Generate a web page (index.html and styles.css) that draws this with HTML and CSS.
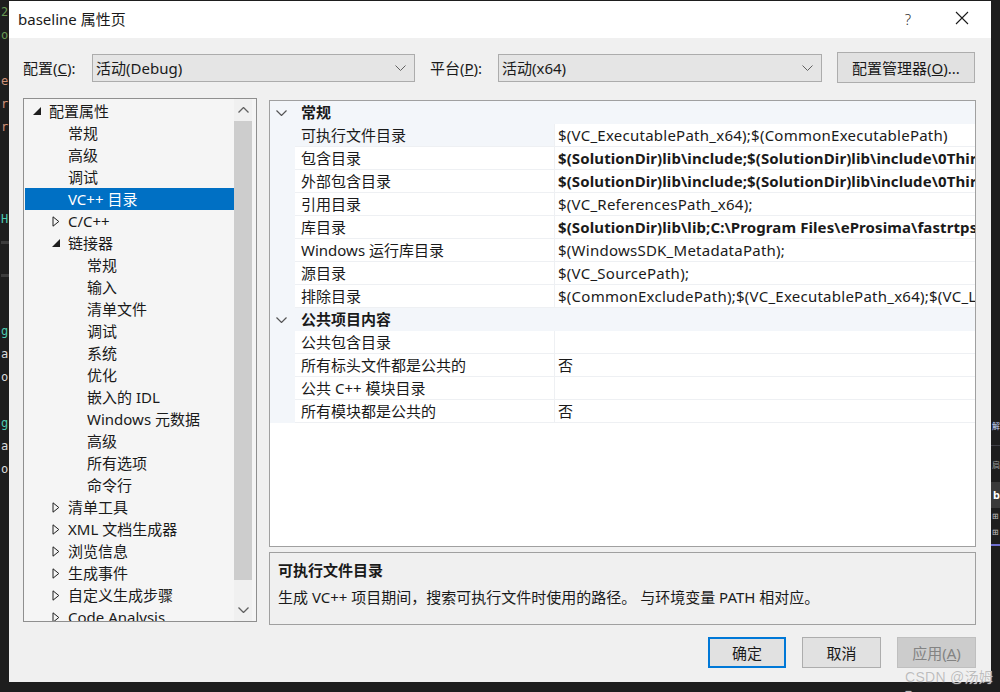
FILE: index.html
```html
<!DOCTYPE html>
<html lang="zh-CN">
<head>
<meta charset="utf-8">
<title>baseline 属性页</title>
<link rel="stylesheet" href="styles.css">
</head>
<body>
<div class="screen">
  <div class="strip left-strip">
    <div class="code c-green">2</div>
    <div class="code c-green">o</div>
    <div class="code"></div>
    <div class="code c-orange">e</div>
    <div class="code c-orange">r</div>
    <div class="code c-orange">r</div>
    <div class="code"></div>
    <div class="code"></div>
    <div class="code"></div>
    <div class="code c-teal">H</div>
    <div class="code"><span class="bar"></span></div>
    <div class="code"><span class="bar"></span></div>
    <div class="code"></div>
    <div class="code c-teal">g</div>
    <div class="code c-white">a</div>
    <div class="code c-white">o</div>
    <div class="code"></div>
    <div class="code c-teal">g</div>
    <div class="code c-white">a</div>
    <div class="code c-white">o</div>
  </div>

  <div class="dialog">
    <div class="titlebar">
      <span class="title">baseline 属性页</span>
      <span class="help">?</span>
      <span class="close"><svg width="14" height="14" viewBox="0 0 14 14"><path d="M1 1L13 13M13 1L1 13" stroke="#1a1a1a" stroke-width="1.1" fill="none"/></svg></span>
    </div>

    <div class="config-row">
      <span class="label lbl-config">配置(<u>C</u>):</span>
      <div class="combo combo-config"><span>活动(Debug)</span><svg class="chev" width="11" height="6" viewBox="0 0 11 6"><path d="M0.5 0.5L5.5 5.5L10.5 0.5" stroke="#606060" fill="none"/></svg></div>
      <span class="label lbl-platform">平台(<u>P</u>):</span>
      <div class="combo combo-platform"><span>活动(x64)</span><svg class="chev" width="11" height="6" viewBox="0 0 11 6"><path d="M0.5 0.5L5.5 5.5L10.5 0.5" stroke="#606060" fill="none"/></svg></div>
      <div class="btn btn-manager">配置管理器(<u>O</u>)...</div>
    </div>

    <div class="main">
      <div class="tree-panel">
        <div class="tree">
          <div class="trow l0"><span class="exp"><svg width="8" height="8" viewBox="0 0 8 8"><path d="M8 0V8H0Z" fill="#1e1e1e"/></svg></span>配置属性</div>
          <div class="trow l1"><span class="exp"></span>常规</div>
          <div class="trow l1"><span class="exp"></span>高级</div>
          <div class="trow l1"><span class="exp"></span>调试</div>
          <div class="trow l1 selected"><span class="exp"></span>VC++ 目录</div>
          <div class="trow l1"><span class="exp"><svg width="8" height="11" viewBox="0 0 8 11"><path d="M1 0.8V10.2L6.8 5.5Z" fill="none" stroke="#1e1e1e"/></svg></span>C/C++</div>
          <div class="trow l1"><span class="exp"><svg width="8" height="8" viewBox="0 0 8 8"><path d="M8 0V8H0Z" fill="#1e1e1e"/></svg></span>链接器</div>
          <div class="trow l2"><span class="exp"></span>常规</div>
          <div class="trow l2"><span class="exp"></span>输入</div>
          <div class="trow l2"><span class="exp"></span>清单文件</div>
          <div class="trow l2"><span class="exp"></span>调试</div>
          <div class="trow l2"><span class="exp"></span>系统</div>
          <div class="trow l2"><span class="exp"></span>优化</div>
          <div class="trow l2"><span class="exp"></span>嵌入的 IDL</div>
          <div class="trow l2"><span class="exp"></span>Windows 元数据</div>
          <div class="trow l2"><span class="exp"></span>高级</div>
          <div class="trow l2"><span class="exp"></span>所有选项</div>
          <div class="trow l2"><span class="exp"></span>命令行</div>
          <div class="trow l1"><span class="exp"><svg width="8" height="11" viewBox="0 0 8 11"><path d="M1 0.8V10.2L6.8 5.5Z" fill="none" stroke="#1e1e1e"/></svg></span>清单工具</div>
          <div class="trow l1"><span class="exp"><svg width="8" height="11" viewBox="0 0 8 11"><path d="M1 0.8V10.2L6.8 5.5Z" fill="none" stroke="#1e1e1e"/></svg></span>XML 文档生成器</div>
          <div class="trow l1"><span class="exp"><svg width="8" height="11" viewBox="0 0 8 11"><path d="M1 0.8V10.2L6.8 5.5Z" fill="none" stroke="#1e1e1e"/></svg></span>浏览信息</div>
          <div class="trow l1"><span class="exp"><svg width="8" height="11" viewBox="0 0 8 11"><path d="M1 0.8V10.2L6.8 5.5Z" fill="none" stroke="#1e1e1e"/></svg></span>生成事件</div>
          <div class="trow l1"><span class="exp"><svg width="8" height="11" viewBox="0 0 8 11"><path d="M1 0.8V10.2L6.8 5.5Z" fill="none" stroke="#1e1e1e"/></svg></span>自定义生成步骤</div>
          <div class="trow l1"><span class="exp"><svg width="8" height="11" viewBox="0 0 8 11"><path d="M1 0.8V10.2L6.8 5.5Z" fill="none" stroke="#1e1e1e"/></svg></span>Code Analysis</div>
        </div>
        <div class="vscroll">
          <div class="sbtn"><svg width="11" height="6" viewBox="0 0 11 6"><path d="M0.5 5.5L5.5 0.5L10.5 5.5" stroke="#606060" stroke-width="1.3" fill="none"/></svg></div>
          <div class="thumb-wrap"><div class="thumb"></div></div>
          <div class="sbtn"><svg width="11" height="6" viewBox="0 0 11 6"><path d="M0.5 0.5L5.5 5.5L10.5 0.5" stroke="#606060" stroke-width="1.3" fill="none"/></svg></div>
        </div>
      </div>

      <div class="right-col">
        <div class="grid">
          <div class="cat"><span class="gut"><svg width="11" height="6" viewBox="0 0 11 6"><path d="M0.5 0.5L5.5 5.5L10.5 0.5" stroke="#555" stroke-width="1.2" fill="none"/></svg></span><span class="cat-name">常规</span></div>
          <div class="prow sel"><span class="gut"></span><span class="pname">可执行文件目录</span><span class="pval">$(VC_ExecutablePath_x64);$(CommonExecutablePath)</span></div>
          <div class="prow"><span class="gut"></span><span class="pname">包含目录</span><span class="pval bold">$(SolutionDir)lib\include;$(SolutionDir)lib\include\0ThirdParty;$(IncludePath)</span></div>
          <div class="prow"><span class="gut"></span><span class="pname">外部包含目录</span><span class="pval bold">$(SolutionDir)lib\include;$(SolutionDir)lib\include\0ThirdParty;$(ExternalIncludePath)</span></div>
          <div class="prow"><span class="gut"></span><span class="pname">引用目录</span><span class="pval">$(VC_ReferencesPath_x64);</span></div>
          <div class="prow"><span class="gut"></span><span class="pname">库目录</span><span class="pval bold">$(SolutionDir)lib\lib;C:\Program Files\eProsima\fastrtps 2.0.0\lib;$(LibraryPath)</span></div>
          <div class="prow"><span class="gut"></span><span class="pname">Windows 运行库目录</span><span class="pval">$(WindowsSDK_MetadataPath);</span></div>
          <div class="prow"><span class="gut"></span><span class="pname">源目录</span><span class="pval">$(VC_SourcePath);</span></div>
          <div class="prow"><span class="gut"></span><span class="pname">排除目录</span><span class="pval">$(CommonExcludePath);$(VC_ExecutablePath_x64);$(VC_LibraryPath_x64)</span></div>
          <div class="cat"><span class="gut"><svg width="11" height="6" viewBox="0 0 11 6"><path d="M0.5 0.5L5.5 5.5L10.5 0.5" stroke="#555" stroke-width="1.2" fill="none"/></svg></span><span class="cat-name">公共项目内容</span></div>
          <div class="prow"><span class="gut"></span><span class="pname">公共包含目录</span><span class="pval"></span></div>
          <div class="prow"><span class="gut"></span><span class="pname">所有标头文件都是公共的</span><span class="pval">否</span></div>
          <div class="prow"><span class="gut"></span><span class="pname">公共 C++ 模块目录</span><span class="pval"></span></div>
          <div class="prow"><span class="gut"></span><span class="pname">所有模块都是公共的</span><span class="pval">否</span></div>
        </div>
        <div class="desc">
          <div class="desc-title">可执行文件目录</div>
          <div class="desc-text">生成 VC++ 项目期间，搜索可执行文件时使用的路径。 与环境变量 PATH 相对应。</div>
        </div>
      </div>
    </div>

    <div class="button-row">
      <div class="btn btn-dlg btn-default">确定</div>
      <div class="btn btn-dlg">取消</div>
      <div class="btn btn-dlg btn-disabled">应用(<u>A</u>)</div>
    </div>
  </div>

  <div class="strip right-strip">
    <div class="rs-gap"></div>
    <div class="rs-char">解</div>
    <div class="rs-line"></div>
    <div class="rs-char dim">扃</div>
    <div class="rs-box">b</div>
    <div class="rs-icon">⊞</div>
    <div class="rs-icon">⊞</div>
    <div class="rs-blue"></div>
  </div>
</div>
<div class="watermark">CSDN @汤姆z</div>
</body>
</html>
```

FILE: styles.css
```css
* { box-sizing: border-box; }

html, body {
  margin: 0;
  padding: 0;
}

body {
  width: 1000px;
  height: 692px;
  overflow: hidden;
  background: #1e1e1e;
  font-family: "Noto Sans", "Noto Sans CJK SC", sans-serif;
  font-size: 15px;
  color: #1a1a1a;
  position: relative;
}

.screen {
  display: flex;
  padding-top: 1px;
  height: 692px;
}

/* editor strips around the dialog */
.strip {
  width: 9px;
  flex: none;
  overflow: hidden;
  background: #1e1e1e;
}

.code {
  height: 23px;
  line-height: 23px;
  font-family: "DejaVu Sans Mono", monospace;
  font-size: 12px;
  padding-left: 1px;
  color: #d4d4d4;
}

.code .bar {
  display: block;
  margin-top: 10px;
  height: 3px;
  background: #3c3c3c;
}

.c-green { color: #6a9955; }
.c-orange { color: #ce9178; }
.c-teal { color: #4ec9b0; }
.c-white { color: #dcdcdc; }

.right-strip {
  display: flex;
  flex-direction: column;
}

.rs-gap { height: 412px; flex: none; }
.rs-char {
  height: 26px;
  line-height: 26px;
  color: #c8d8ff;
  font-size: 8px;
  padding-left: 1px;
}
.rs-char.dim { color: #9a9a9a; }
.rs-line { height: 1px; background: #3f3f46; margin: 6px 0; }
.rs-box {
  height: 26px;
  margin-top: 4px;
  background: #3a3a3a;
  color: #ffffff;
  font-weight: bold;
  font-size: 11px;
  padding-left: 2px;
  line-height: 26px;
}
.rs-icon {
  height: 16px;
  line-height: 16px;
  font-size: 8px;
  color: #c0c0c0;
  padding-left: 1px;
}
.rs-blue { height: 2px; background: #7070d0; margin-top: 4px; }

/* dialog */
.dialog {
  width: 982px;
  height: 681px;
  flex: none;
  background: #f0f0f0;
  display: flex;
  flex-direction: column;
}

.titlebar {
  height: 37px;
  background: #ffffff;
  display: flex;
  align-items: center;
  padding-left: 9px;
}

.title {
  font-size: 15px;
  flex: 1;
  margin-top: -2px;
}

.help {
  font-size: 15px;
  font-weight: 300;
  color: #333;
  width: 20px;
  margin-right: 37px;
  text-align: center;
  margin-top: -2px;
}

.close {
  width: 14px;
  height: 14px;
  margin-right: 22px;
  display: flex;
  margin-top: -3px;
}

.config-row {
  margin-top: 14px;
  height: 31px;
  display: flex;
  align-items: center;
  padding-left: 14px;
}

.label {
  flex: none;
}

.lbl-config { width: 69px; }
.lbl-platform { width: 68px; margin-left: 15px; }

.combo {
  height: 28px;
  background: #e5e5e5;
  border: 1px solid #acacac;
  display: flex;
  align-items: center;
  justify-content: space-between;
  padding: 0 8px 0 3px;
}

.combo-config { width: 323px; }
.combo-platform { width: 324px; }

.chev { flex: none; }

.btn {
  height: 31px;
  background: #e1e1e1;
  border: 1px solid #adadad;
  display: flex;
  align-items: center;
  justify-content: center;
  flex: none;
}

.btn-manager {
  width: 138px;
  margin-left: 15px;
}

/* main area */
.main {
  margin-top: 15px;
  height: 527px;
  display: flex;
  align-items: flex-start;
  padding-left: 14px;
}

.tree-panel {
  width: 234px;
  height: 524px;
  border: 1px solid #8f8f8f;
  background: #f5f5f5;
  display: flex;
  padding: 0 3px 0 0;
  flex: none;
}

.tree {
  width: 210px;
  padding: 1px 0 0 1px;
  overflow: hidden;
}

.trow {
  height: 22px;
  line-height: 22px;
  white-space: nowrap;
  display: flex;
  align-items: center;
}

.trow.l0 { padding-left: 8px; }
.trow.l1 { padding-left: 27px; }
.trow.l2 { padding-left: 46px; }

.trow.selected {
  background: #0070c4;
  color: #ffffff;
}

.exp {
  width: 16px;
  flex: none;
  display: flex;
  align-items: center;
}

.vscroll {
  width: 18px;
  background: #f0f0f0;
  display: flex;
  flex-direction: column;
  flex: none;
}

.sbtn {
  height: 22px;
  display: flex;
  align-items: center;
  justify-content: center;
  flex: none;
}

.thumb-wrap {
  flex: 1;
  padding-bottom: 19px;
}

.thumb {
  height: 100%;
  background: #cdcdcd;
}

.right-col {
  margin-left: 12px;
  margin-top: 2px;
  width: 707px;
  display: flex;
  flex-direction: column;
  gap: 5px;
}

.grid {
  height: 447px;
  border: 1px solid #a0a0a0;
  background: #ffffff;
  overflow: hidden;
}

.cat, .prow {
  height: 23px;
  display: grid;
  grid-template-columns: 25px 260px 1fr;
  white-space: nowrap;
}

.cat {
  display: flex;
  background: #f3f6fa;
  align-items: center;
}

.gut {
  background: #f3f6fa;
  width: 25px;
  height: 23px;
  display: flex;
  align-items: center;
  justify-content: center;
  flex: none;
  padding-right: 2px;
}

.cat-name {
  font-weight: bold;
  padding-left: 6px;
  line-height: 23px;
}

.pname {
  padding-left: 6px;
  line-height: 22px;
  border-bottom: 1px solid #eef0f3;
  border-right: 1px solid #eef0f3;
  overflow: hidden;
}

.prow.sel .pname {
  background: #f3f6fa;
}

.pval {
  padding-left: 3px;
  line-height: 22px;
  border-bottom: 1px solid #eef0f3;
  overflow: hidden;
  letter-spacing: 0.25px;
}

.pval.bold { font-weight: bold; letter-spacing: 0.1px; }

.desc {
  height: 73px;
  border: 1px solid #a0a0a0;
  background: #f0f0f0;
  padding: 6px 8px 0 8px;
}

.desc-title {
  font-weight: bold;
  line-height: 22px;
}

.desc-text {
  line-height: 22px;
  margin-top: 5px;
}

/* bottom buttons */
.button-row {
  margin-top: 12px;
  display: flex;
  justify-content: flex-end;
  gap: 16px;
  padding-right: 15px;
}

.btn-dlg {
  width: 79px;
}

.btn-default {
  border: 2px solid #0078d7;
  width: 78px;
}

.btn-disabled {
  background: #cccccc;
  border-color: #bfbfbf;
  color: #838383;
}

.watermark {
  position: absolute;
  left: 905px;
  top: 666px;
  font-size: 14px;
  color: #bdbdbd;
  text-shadow: 0 0 1px #ffffff;
  letter-spacing: 0.3px;
  font-family: "Liberation Sans", "Noto Sans CJK SC", sans-serif;
}
```
